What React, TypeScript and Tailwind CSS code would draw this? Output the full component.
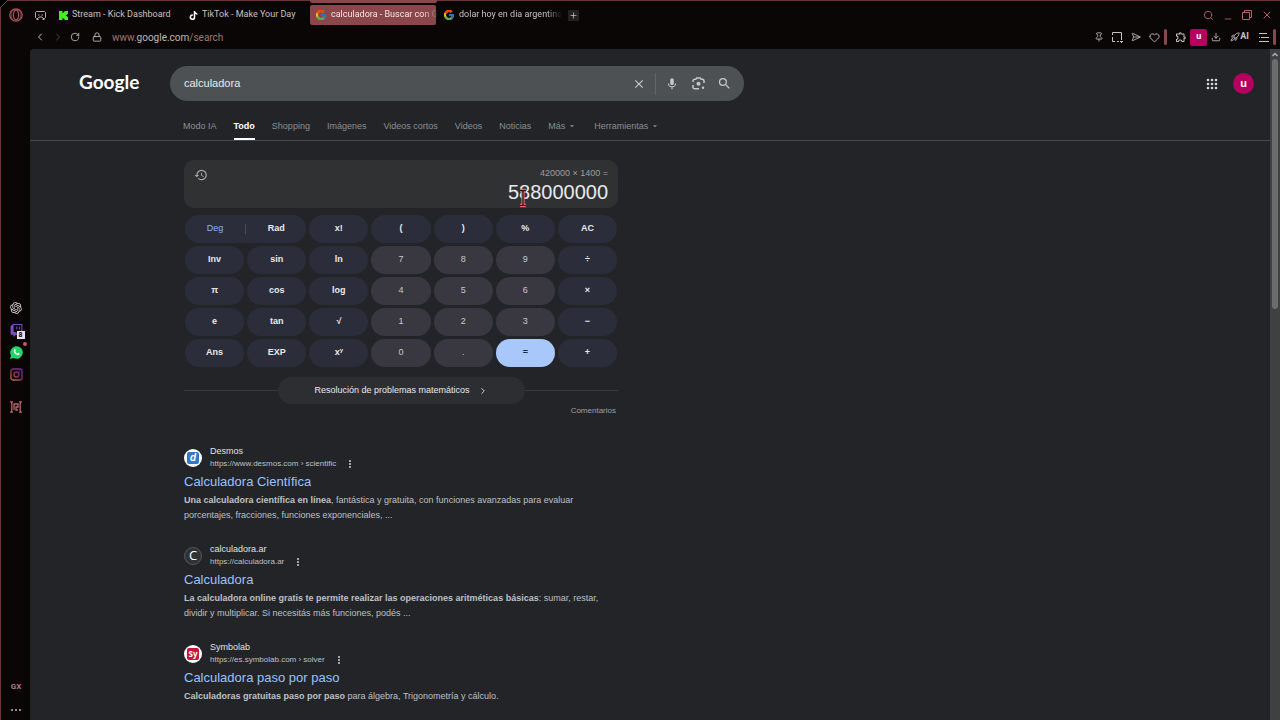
import type { ReactNode } from 'react';
import { ChevronLeft, ChevronRight, Lock, Pin, Search, X, Heart, Download, Rocket, Minus, Plus, RotateCw, SendHorizontal } from 'lucide-react';
import { FaTiktok, FaTwitch } from 'react-icons/fa6';
import { FcGoogle } from 'react-icons/fc';
import { MdArrowDropDown, MdClose, MdHistory, MdMic, MdMoreVert, MdOutlineExtension, MdSearch } from 'react-icons/md';
import { RiOpenaiFill } from 'react-icons/ri';

interface Key {
  label: ReactNode;
  name?: string;
  kind?: 'digit' | 'equals';
}

interface Result {
  site: string;
  url: string;
  title: string;
  bold: string;
  text: string;
  icon: ReactNode;
}

const keys: Key[] = [
  { label: 'x!' },
  { label: '(' },
  { label: ')' },
  { label: '%' },
  { label: 'AC' },
  { label: 'Inv' },
  { label: 'sin' },
  { label: 'ln' },
  { label: '7', kind: 'digit' },
  { label: '8', kind: 'digit' },
  { label: '9', kind: 'digit' },
  { label: '÷' },
  { label: 'π' },
  { label: 'cos' },
  { label: 'log' },
  { label: '4', kind: 'digit' },
  { label: '5', kind: 'digit' },
  { label: '6', kind: 'digit' },
  { label: '×' },
  { label: 'e' },
  { label: 'tan' },
  { label: '√' },
  { label: '1', kind: 'digit' },
  { label: '2', kind: 'digit' },
  { label: '3', kind: 'digit' },
  { label: '−' },
  { label: 'Ans' },
  { label: 'EXP' },
  { label: <span>x<sup className="text-[6px]">y</sup></span>, name: 'x elevado a y' },
  { label: '0', kind: 'digit' },
  { label: '.', kind: 'digit' },
  { label: '=', kind: 'equals' },
  { label: '+' },
];

const keyStyles = {
  fn: 'bg-[#2b2d3b] text-[#e8eaed] font-bold',
  digit: 'bg-[#393841] text-[#c8c9cc]',
  equals: 'bg-[#a8c7fa] text-[#1f2a44] font-bold',
};

const results: Result[] = [
  {
    site: 'Desmos',
    url: 'https://www.desmos.com › scientific',
    title: 'Calculadora Científica',
    bold: 'Una calculadora científica en línea',
    text: ', fantástica y gratuita, con funciones avanzadas para evaluar porcentajes, fracciones, funciones exponenciales, ...',
    icon: (
      <span className="flex size-[18px] items-center justify-center rounded-full bg-white">
        <span className="flex size-3 items-center justify-center rounded-xs bg-[#3576c8] text-[10px] leading-none font-bold text-white italic">d</span>
      </span>
    ),
  },
  {
    site: 'calculadora.ar',
    url: 'https://calculadora.ar',
    title: 'Calculadora',
    bold: 'La calculadora online gratis te permite realizar las operaciones aritméticas básicas',
    text: ': sumar, restar, dividir y multiplicar. Si necesitás más funciones, podés ...',
    icon: (
      <span className="flex size-[18px] items-center justify-center rounded-full border border-[#54575b] bg-[#303336] font-['Open_Sans',sans-serif] text-[13px] leading-none text-white">C</span>
    ),
  },
  {
    site: 'Symbolab',
    url: 'https://es.symbolab.com › solver',
    title: 'Calculadora paso por paso',
    bold: 'Calculadoras gratuitas paso por paso',
    text: ' para álgebra, Trigonometría y cálculo.',
    icon: (
      <span className="flex size-[18px] items-center justify-center rounded-full bg-white">
        <span className="flex size-3 items-center justify-center rounded-xs bg-[#c8143c] font-['Open_Sans',sans-serif] text-[8px] leading-none font-bold text-white">Sy</span>
      </span>
    ),
  },
];

function OperaIcon() {
  return (
    <svg aria-hidden="true" className="size-[14px] text-[#a4565b]" fill="none" stroke="currentColor" strokeWidth={1.3} viewBox="0 0 14 14">
      <circle cx="7" cy="7" r="6.2" />
      <ellipse cx="7" cy="7" rx="2.6" ry="5" />
      <path d="M5 1.6C2.8 2.6 2.2 4.8 2.2 7s.6 4.4 2.8 5.4M9 1.6c2.2 1 2.8 3.2 2.8 5.4s-.6 4.4-2.8 5.4" strokeWidth={0.7} />
    </svg>
  );
}

function WorkspaceIcon() {
  return (
    <svg aria-hidden="true" className="h-[9px] w-[11px] text-[#b9adad]" fill="none" stroke="currentColor" viewBox="0 0 11 9">
      <path d="M1.500.5h8l1 1v5l-1 1H8L7 6H4L3 7.500H1.500l-1-1v-5zM3 4h1.500M6.500 4H8M1.500 8.500h2M7.500 8.500h2" />
    </svg>
  );
}

function KickIcon() {
  return (
    <svg aria-hidden="true" className="size-[9px] shrink-0 text-[#3df51b]" fill="currentColor" viewBox="0 0 9 9">
      <path d="M0 0h3.500v2h1V1h1V0H9v3H8v1H7v1h1v1h1v3H5.500V8h-1V7h-1v2H0z" />
    </svg>
  );
}

function SnapshotIcon() {
  return (
    <svg aria-hidden="true" className="size-[11px]" fill="none" stroke="currentColor" viewBox="0 0 11 11">
      <path d="M.5 3V.5H9.500V8M.5 5v4.500H3M5 9.500h2M9.500 9v2M8 9.500h3" />
    </svg>
  );
}

function MenuIcon() {
  return (
    <svg aria-hidden="true" className="h-[9px] w-[10px]" fill="none" stroke="currentColor" viewBox="0 0 10 9">
      <path d="M0 .5h8M2 4.500h8M0 8.500h10M0 4.500h1" />
    </svg>
  );
}

function RestoreIcon() {
  return (
    <svg aria-hidden="true" className="size-[10px]" fill="none" stroke="currentColor" viewBox="0 0 10 10">
      <path d="M.5 2.500h7v7h-7zM2.500 2.500v-2h7v7h-2" />
    </svg>
  );
}

function LensIcon() {
  return (
    <svg aria-hidden="true" className="size-[13px]" fill="none" stroke="currentColor" strokeWidth={1.5} viewBox="0 0 13 13">
      <path d="M1 5V4a1.800 1.800 0 0 1 1.800-1.800h1L4.800 1h3.400l1 1.200h1A1.800 1.800 0 0 1 12 4v2M1 8v1.500A1.800 1.800 0 0 0 2.800 11.800H7" />
      <circle cx="6.5" cy="6.8" r="2" fill="currentColor" stroke="none" />
      <circle cx="11" cy="10.8" r="1.2" fill="currentColor" stroke="none" />
    </svg>
  );
}

function AppsIcon() {
  return (
    <svg aria-hidden="true" className="size-3" fill="currentColor" viewBox="0 0 12 12">
      {[2, 6, 10].map(y => [2, 6, 10].map(x => <circle key={`${x}-${y}`} cx={x} cy={y} r="1.3" />))}
    </svg>
  );
}

function WhatsappIcon() {
  return (
    <svg aria-hidden="true" className="size-[13px]" viewBox="0 0 13 13">
      <path d="M0 13l1-3.500A6.300 6.300 0 1 1 3.500 12z" fill="#25d366" />
      <path d="M4.300 3.400c.4-.4.900-.4 1.100.1l.4 1c.1.300-.4.800-.5 1.100.4.900 1.100 1.500 2 1.900.3-.1.800-.8 1.100-.7l1.100.6c.3.200.1.900-.3 1.300-.8.800-2.300.5-3.700-.6C4.100 7 3.200 4.600 4.300 3.400z" fill="#fff" />
    </svg>
  );
}

function InstagramIcon() {
  return (
    <svg aria-hidden="true" className="size-[13px]" fill="none" stroke="url(#ig)" strokeWidth={1.3} viewBox="0 0 13 13">
      <defs>
        <linearGradient id="ig" x1="0" y1="13" x2="13" y2="0" gradientUnits="userSpaceOnUse">
          <stop offset="0" stopColor="#d08a32" />
          <stop offset=".5" stopColor="#902860" />
          <stop offset="1" stopColor="#5a36b8" />
        </linearGradient>
      </defs>
      <rect x="1" y="1" width="11" height="11" rx="2" />
      <circle cx="6.5" cy="6.5" r="2.5" />
      <path d="M9.300 3.500h.7" />
    </svg>
  );
}

function ModsIcon() {
  return (
    <svg aria-hidden="true" className="size-3 text-[#b8666c]" fill="none" stroke="currentColor" strokeWidth={1.3} viewBox="0 0 12 12">
      <path d="M3 .8H.8l1 1.700v7l-1 1.700H3M9 .8h2.200l-1 1.700v7l1 1.700H9M4 9V3h4v3H6v3h2" />
    </svg>
  );
}

function TopBar() {
  return (
    <header className="h-[49px] shrink-0 text-[#c9c0c0]">
      <div className="flex h-[30px] items-center pr-[7px] pl-[9px] text-[9px]">
        <button aria-label="Menú de Opera" className="mr-3"><OperaIcon /></button>
        <button aria-label="Espacios de trabajo" className="mr-[13px]"><WorkspaceIcon /></button>
        <button className="flex w-[130px] items-center gap-1">
          <KickIcon />
          Stream - Kick Dashboard
        </button>
        <button className="flex w-[121px] items-center gap-1">
          <FaTiktok aria-hidden="true" className="size-[9px] text-white" />
          TikTok - Make Your Day
        </button>
        <button className="flex h-5 w-[126px] items-center gap-1 rounded-xs bg-[#8a464b] pl-[5px] whitespace-nowrap text-[#f3e6e6]">
          <FcGoogle aria-hidden="true" className="size-3 shrink-0" />
          <span className="mask-r-from-85% text-left">calculadora - Buscar con G</span>
        </button>
        <button className="ml-[7px] flex w-[114px] items-center gap-1 whitespace-nowrap">
          <FcGoogle aria-hidden="true" className="size-3 shrink-0" />
          <span className="mask-r-from-85% text-left">dolar hoy en dia argentina</span>
        </button>
        <button aria-label="Nueva pestaña" className="ml-[11px] flex size-[11px] items-center justify-center bg-[#261f1f]">
          <Plus className="size-[9px]" />
        </button>
        <div className="ml-auto flex items-center gap-[9px] text-[#b5646c]">
          <button aria-label="Buscar pestañas"><Search className="size-[11px]" /></button>
          <button aria-label="Minimizar"><Minus className="mt-2 size-[10px]" /></button>
          <button aria-label="Restaurar"><RestoreIcon /></button>
          <button aria-label="Cerrar"><X className="size-3" /></button>
        </div>
      </div>
      <div className="flex h-[14px] items-center pr-1 pl-[34px]">
        <button aria-label="Atrás"><ChevronLeft className="size-3" /></button>
        <button aria-label="Adelante" className="ml-[6px] text-[#4a4141]"><ChevronRight className="size-3" /></button>
        <button aria-label="Recargar" className="ml-[6px]"><RotateCw className="size-[10px]" /></button>
        <Lock aria-hidden="true" className="mr-[10px] ml-3 size-[10px]" />
        <span className="text-[10px] text-[#a0766f]">www.<span className="text-[#c2b5b3]">google.com</span>/search</span>
        <div className="ml-auto flex items-center gap-2">
          <button aria-label="Fijar"><Pin className="size-[10px]" /></button>
          <button aria-label="Captura"><SnapshotIcon /></button>
          <button aria-label="Enviar"><SendHorizontal className="size-[10px]" /></button>
          <button aria-label="Favoritos"><Heart className="size-[11px]" /></button>
        </div>
        <span className="ml-1 h-4 w-[3px] rounded-sm bg-[#86484c]" />
        <div className="ml-2 flex items-center">
          <button aria-label="Extensiones"><MdOutlineExtension className="size-3" /></button>
          <button aria-label="Perfil" className="ml-[3px] flex size-[17px] items-center justify-center rounded-xs bg-[#b5005f] text-[9px] font-bold text-white">u</button>
          <button aria-label="Descargas" className="ml-1"><Download className="size-[10px]" /></button>
          <button className="ml-[9px] flex items-center text-[9px] font-bold">
            <Rocket aria-hidden="true" className="size-[10px]" />
            AI
          </button>
          <button aria-label="Configuración" className="ml-[10px]"><MenuIcon /></button>
        </div>
        <span className="ml-1 h-4 w-[3px] rounded-sm bg-[#86484c]" />
      </div>
    </header>
  );
}

function Sidebar() {
  return (
    <aside className="flex w-[30px] shrink-0 flex-col items-center pr-[2px] pl-1">
      <div className="mt-[252px] flex flex-col items-center gap-[9px]">
        <button aria-label="ChatGPT"><RiOpenaiFill className="size-[14px] text-[#d8d8d8]" /></button>
        <button aria-label="Twitch" className="relative">
          <FaTwitch className="size-[13px] text-[#7d4ec2]" />
          <span className="absolute top-[7px] left-[7px] flex size-2 items-center justify-center bg-[#e8e0f0] text-[7px] font-bold text-black">8</span>
        </button>
        <button aria-label="WhatsApp" className="relative">
          <WhatsappIcon />
          <span className="absolute -top-1 -right-1 size-1 rounded-full bg-[#c4586a]" />
        </button>
        <button aria-label="Instagram"><InstagramIcon /></button>
      </div>
      <button aria-label="Mods" className="mt-5"><ModsIcon /></button>
      <button className="mt-auto text-[8px] leading-3 font-bold text-[#b37a80]">GX</button>
      <button aria-label="Más opciones" className="mt-4 mb-[9px] flex gap-[2px]">
        <span className="size-[2px] bg-[#a08084]" />
        <span className="size-[2px] bg-[#a08084]" />
        <span className="size-[2px] bg-[#a08084]" />
      </button>
    </aside>
  );
}

function SearchHeader() {
  return (
    <div className="border-b border-[#46484b]">
      <div className="flex items-center pt-[17px] pr-4">
        <a href="#" className="w-[140px] pb-1 pl-[49px] font-['Lato',sans-serif] text-[19px] leading-7 font-bold text-white">Google</a>
        <form className="flex h-[35px] w-[574px] items-center rounded-full bg-[#4d5154] pr-3 pl-[14px] text-[#c6c8ca]">
          <input type="text" aria-label="Buscar" defaultValue="calculadora" className="min-w-0 flex-1 text-[11px] text-[#e8eaed] outline-none" />
          <button type="button" aria-label="Borrar"><MdClose className="size-[14px]" /></button>
          <span className="mr-[9px] ml-[9px] h-[22px] w-px bg-[#62666a]" />
          <button type="button" aria-label="Búsqueda por voz"><MdMic className="size-[14px]" /></button>
          <button type="button" aria-label="Búsqueda por imagen" className="ml-[13px]"><LensIcon /></button>
          <button type="submit" aria-label="Buscar" className="ml-3"><MdSearch className="size-[15px]" /></button>
        </form>
        <button aria-label="Aplicaciones de Google" className="ml-auto text-[#d4d6d9]"><AppsIcon /></button>
        <button aria-label="Cuenta" className="ml-[15px] flex size-[21px] items-center justify-center rounded-full bg-[#b5005f] text-[11px] font-bold text-white">u</button>
      </div>
      <nav className="mt-[19px] ml-[153px] flex h-5 gap-[17px] text-[9px] leading-3 text-[#8b8e93]">
        <a href="#">Modo IA</a>
        <a href="#" className="border-b-2 border-white font-bold text-white">Todo</a>
        <a href="#">Shopping</a>
        <a href="#">Imágenes</a>
        <a href="#">Videos cortos</a>
        <a href="#">Videos</a>
        <a href="#">Noticias</a>
        <button className="flex h-3 items-center gap-[2px]">Más <MdArrowDropDown className="size-[10px]" /></button>
        <button className="flex h-3 items-center gap-[2px]">Herramientas <MdArrowDropDown className="size-[10px]" /></button>
      </nav>
    </div>
  );
}

function Calculator() {
  return (
    <section>
      <div className="relative flex h-12 justify-between rounded-[10px] bg-[#303132] px-[10px] pt-2">
        <button aria-label="Historial" className="self-start text-[#a5a7aa]"><MdHistory className="size-[14px]" /></button>
        <div className="text-right">
          <div className="text-[9px] leading-[11px] text-[#9aa0a6]">420000 × 1400 =</div>
          <div className="text-xl leading-[26px] text-[#e8eaed]">588000000</div>
        </div>
        {/* text cursor over the display */}
        <svg aria-hidden="true" className="absolute top-[29px] right-[91px] h-[18px] w-2 overflow-visible" fill="none" viewBox="0 0 8 18">
          <path d="M1 1.500h2l1 1 1-1h2M4 2.500v13M1 16.500h2l1-1 1 1h2" stroke="#e0656a" strokeWidth={3.4} />
          <path d="M1 1.500h2l1 1 1-1h2M4 2.500v13M1 16.500h2l1-1 1 1h2" stroke="#2a1416" strokeWidth={1.2} />
        </svg>
      </div>
      <div className="mt-[7px] grid grid-cols-7 gap-[3px] px-px text-[9px]">
        <div className="col-span-2 flex h-7 items-center rounded-full bg-[#2b2d3b]">
          <button className="flex-1 text-[#8ab4f8]">Deg</button>
          <span className="h-[10px] w-px bg-[#4a4d5c]" />
          <button className="flex-1 font-bold text-[#e8eaed]">Rad</button>
        </div>
        {keys.map((key, i) => (
          <button key={i} aria-label={key.name} className={`h-7 rounded-full ${keyStyles[key.kind ?? 'fn']}`}>
            {key.label}
          </button>
        ))}
      </div>
      <div className="mt-[10px] flex items-center">
        <span className="h-px flex-1 bg-[#37393c]" />
        <button className="flex h-[27px] w-[247px] items-center justify-center gap-2 rounded-full bg-[#2d2e31] text-[9px] text-[#e8eaed]">
          Resolución de problemas matemáticos
          <ChevronRight aria-hidden="true" className="size-[10px]" />
        </button>
        <span className="h-px flex-1 bg-[#37393c]" />
      </div>
      <div className="mt-px pr-[2px] text-right text-[8px] leading-3 text-[#9aa0a6]">
        <a href="#">Comentarios</a>
      </div>
    </section>
  );
}

function ResultItem({ result }: { result: Result }) {
  return (
    <article className="text-[#bdc1c6]">
      <div className="flex items-center gap-2">
        {result.icon}
        <div>
          <div className="text-[9px] leading-[13px] text-[#e0e2e5]">{result.site}</div>
          <div className="flex items-center gap-2 text-[8px] leading-3">
            {result.url}
            <button aria-label={`Más sobre ${result.site}`}><MdMoreVert className="size-3" /></button>
          </div>
        </div>
      </div>
      <h3 className="mt-1 text-[13px] leading-4 text-[#99c3ff]">
        <a href="#">{result.title}</a>
      </h3>
      <p className="mt-[3px] text-[9px] leading-[15px]">
        <b>{result.bold}</b>
        {result.text}
      </p>
    </article>
  );
}

export default function App() {
  return (
    <div className="relative flex h-screen flex-col overflow-hidden bg-[#0b0606] font-['Roboto',sans-serif]">
      {/* window frame with its cut corner */}
      <span className="pointer-events-none absolute inset-0 border-t border-l border-[#6b3539]" />
      <svg aria-hidden="true" className="absolute top-0 left-0 size-2" viewBox="0 0 8 8">
        <path d="M0 0h8L0 8z" fill="#000" />
        <path d="M0 8l8-8" stroke="#8a464b" />
      </svg>
      <span className="absolute top-0 left-[310px] h-[3px] w-[127px] rounded-b-xs bg-[#8a464b]" />

      <TopBar />
      <div className="flex min-h-0 flex-1">
        <Sidebar />
        <main className="flex min-w-0 flex-1 overflow-hidden rounded-tl-sm bg-[#232428] font-['Liberation_Sans',Arial,sans-serif]">
          <div className="min-w-0 flex-1">
            <SearchHeader />
            <div className="ml-[154px] w-[434px] pt-[19px]">
              <Calculator />
              <div className="mt-7 flex flex-col gap-5">
                {results.map(result => (
                  <ResultItem key={result.site} result={result} />
                ))}
              </div>
            </div>
          </div>
          <div aria-hidden="true" className="flex w-[10px] flex-col items-center bg-[#3f4042]">
            <svg className="mt-[3px] h-[5px] w-[6px] shrink-0" fill="none" stroke="#b0b0b0" strokeWidth={1.5} viewBox="0 0 6 5">
              <path d="M.5 4L3 1.500 5.500 4" />
            </svg>
            <span className="mt-[2px] h-[250px] w-[6px] rounded-sm bg-[#6b6c6e]" />
          </div>
        </main>
      </div>
    </div>
  );
}
